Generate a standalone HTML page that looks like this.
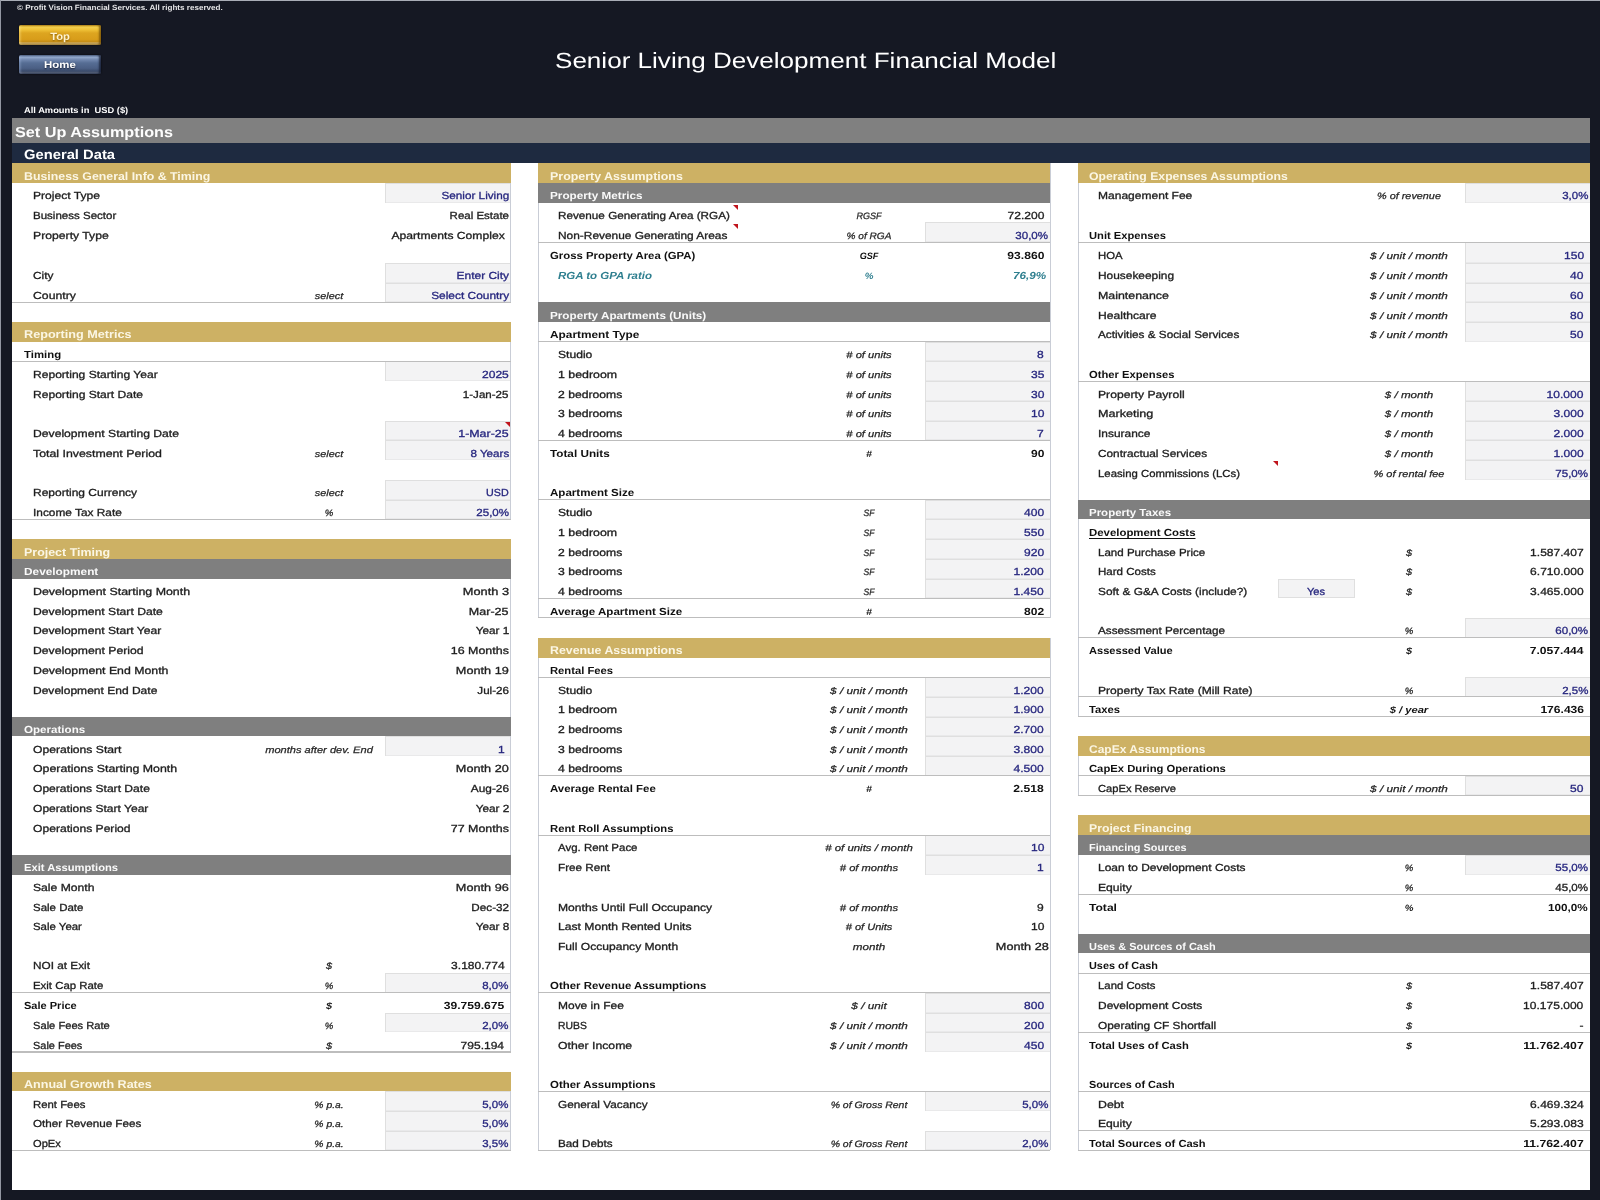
<!DOCTYPE html>
<html lang="en"><head><meta charset="utf-8">
<title>Senior Living Development Financial Model</title>
<style>
html,body{margin:0;padding:0}
html{will-change:transform}
body{width:1600px;height:1200px;overflow:hidden;position:relative;background:#151823;font-family:"Liberation Sans",sans-serif;color:#1c1c1c}
.b{position:absolute}
.t{position:absolute;white-space:nowrap;display:block;text-rendering:geometricPrecision}
.n{font-weight:400;color:#1f1f1f;-webkit-text-stroke:0.3px #1a1a1a}
.in{color:#27277f;-webkit-text-stroke:0.3px #27277f}
.bl{font-weight:700;color:#111}
.ul{text-decoration:underline;text-underline-offset:1.5px;text-decoration-thickness:1px}
.u{font-style:italic;color:#262626;-webkit-text-stroke:0.25px #262626}
.ub{font-style:italic;font-weight:700;color:#111}
.bi{font-style:italic;font-weight:700}
.teal{color:#2f7f8f}
.g{font-weight:700;color:#fbf6e4}
.h{font-weight:700;color:#fafafa}
.w{color:#fff}
.wb{color:#fff;font-weight:700}
.btn{position:absolute;left:18.5px;width:82px;border-radius:2px;box-sizing:border-box}
</style></head><body>
<div class="b" style="left:0;top:0;width:1600px;height:1px;background:#a9adb6"></div>
<div class="b" style="left:0;top:0;width:1px;height:1200px;background:#9397a2"></div>
<div class="b" style="left:12.4px;top:118.4px;width:1577.6px;height:1071.6px;background:#fff"></div>
<div class="b" style="left:12.4px;top:118.4px;width:1577.6px;height:25px;background:#808080"></div>
<div class="b" style="left:12.4px;top:143.4px;width:1577.6px;height:19.7px;background:#1e2a40"></div>
<span class="t wb" style="top:3px;font-size:7.5px;line-height:9.0px;left:17.20px;transform-origin:0 50%;transform:scaleX(1.0769);color:#e4e4e6;">© Profit Vision Financial Services. All rights reserved.</span>
<div class="btn" style="top:25.4px;height:20.1px;background:linear-gradient(180deg,#b8860f 0%,#f2cf4e 10%,#efc136 24%,#dda520 40%,#d89d1a 72%,#c48c16 84%,#c9a85e 89%,#a98a4a 100%);box-shadow:inset -2px 0 2px rgba(110,75,5,.75),inset 2px 0 2px rgba(255,235,150,.35),0 0 2px rgba(0,0,0,.8)"></div>
<div class="btn" style="top:54.6px;height:19px;background:linear-gradient(180deg,#5d7296 0%,#92a8cc 12%,#7389b0 24%,#566d94 42%,#4b5f84 70%,#3a4a69 86%,#566079 90%,#3b445a 100%);box-shadow:inset -2px 0 2px rgba(20,28,48,.8),inset 2px 0 2px rgba(170,190,225,.3),0 0 2px rgba(0,0,0,.8)"></div>
<span class="t wb" style="top:31px;font-size:10.5px;line-height:12.6px;left:59.80px;transform-origin:50% 50%;transform:translateX(-50%) scaleX(1.0667);color:#fff3d0;text-shadow:0 1px 1.5px rgba(120,80,0,.8);">Top</span>
<span class="t wb" style="top:60px;font-size:10.0px;line-height:12.0px;left:59.70px;transform-origin:50% 50%;transform:translateX(-50%) scaleX(1.144);color:#fff;text-shadow:0 1px 1.5px rgba(10,15,30,.8);">Home</span>
<span class="t w" style="top:48px;font-size:22.0px;line-height:26.4px;left:555.20px;transform-origin:0 50%;transform:scaleX(1.1845);">Senior Living Development Financial Model</span>
<span class="t wb" style="top:105px;font-size:8.5px;line-height:10.2px;left:23.50px;transform-origin:0 50%;transform:scaleX(1.0959);">All Amounts in  USD ($)</span>
<span class="t wb" style="top:125px;font-size:14.5px;line-height:17.4px;left:15.40px;transform-origin:0 50%;transform:scaleX(1.1185);color:#fdfdfd;">Set Up Assumptions</span>
<span class="t wb" style="top:147px;font-size:13.5px;line-height:16.2px;left:24.40px;transform-origin:0 50%;transform:scaleX(1.0925);">General Data</span>
<div class="b" style="left:12.40px;top:163.20px;width:498.40px;height:19.90px;background:#cdb164;"></div>
<div class="b" style="left:385.10px;top:183.10px;width:125.30px;height:19.80px;background:#f3f3f4;box-shadow:inset 0 1px 0 #dfdfdf,inset 1px 0 0 #dfdfdf,inset 0 -0.5px 0 #dfdfdf;"></div>
<div class="b" style="left:385.10px;top:262.90px;width:125.30px;height:19.70px;background:#f3f3f4;box-shadow:inset 0 1px 0 #dfdfdf,inset 1px 0 0 #dfdfdf,inset 0 -0.5px 0 #dfdfdf;"></div>
<div class="b" style="left:385.10px;top:282.60px;width:125.30px;height:19.80px;background:#f3f3f4;box-shadow:inset 0 1px 0 #dfdfdf,inset 1px 0 0 #dfdfdf,inset 0 -0.5px 0 #dfdfdf;"></div>
<div class="b" style="left:12.40px;top:322.20px;width:498.40px;height:19.50px;background:#cdb164;"></div>
<div class="b" style="left:385.10px;top:361.40px;width:125.30px;height:20.00px;background:#f3f3f4;box-shadow:inset 0 1px 0 #dfdfdf,inset 1px 0 0 #dfdfdf,inset 0 -0.5px 0 #dfdfdf;"></div>
<div class="b" style="left:385.10px;top:420.90px;width:125.30px;height:19.50px;background:#f3f3f4;box-shadow:inset 0 1px 0 #dfdfdf,inset 1px 0 0 #dfdfdf,inset 0 -0.5px 0 #dfdfdf;"></div>
<div class="b" style="left:385.10px;top:440.40px;width:125.30px;height:20.00px;background:#f3f3f4;box-shadow:inset 0 1px 0 #dfdfdf,inset 1px 0 0 #dfdfdf,inset 0 -0.5px 0 #dfdfdf;"></div>
<div class="b" style="left:385.10px;top:480.05px;width:125.30px;height:19.65px;background:#f3f3f4;box-shadow:inset 0 1px 0 #dfdfdf,inset 1px 0 0 #dfdfdf,inset 0 -0.5px 0 #dfdfdf;"></div>
<div class="b" style="left:385.10px;top:499.70px;width:125.30px;height:19.70px;background:#f3f3f4;box-shadow:inset 0 1px 0 #dfdfdf,inset 1px 0 0 #dfdfdf,inset 0 -0.5px 0 #dfdfdf;"></div>
<div class="b" style="left:12.40px;top:539.40px;width:498.40px;height:19.50px;background:#cdb164;"></div>
<div class="b" style="left:12.40px;top:558.90px;width:498.40px;height:19.80px;background:#7f7f7f;"></div>
<div class="b" style="left:12.40px;top:716.70px;width:498.40px;height:19.70px;background:#7f7f7f;"></div>
<div class="b" style="left:385.10px;top:736.40px;width:125.30px;height:19.50px;background:#f3f3f4;box-shadow:inset 0 1px 0 #dfdfdf,inset 1px 0 0 #dfdfdf,inset 0 -0.5px 0 #dfdfdf;"></div>
<div class="b" style="left:12.40px;top:854.70px;width:498.40px;height:19.85px;background:#7f7f7f;"></div>
<div class="b" style="left:385.10px;top:973.10px;width:125.30px;height:19.80px;background:#f3f3f4;box-shadow:inset 0 1px 0 #dfdfdf,inset 1px 0 0 #dfdfdf,inset 0 -0.5px 0 #dfdfdf;"></div>
<div class="b" style="left:385.10px;top:1012.70px;width:125.30px;height:19.70px;background:#f3f3f4;box-shadow:inset 0 1px 0 #dfdfdf,inset 1px 0 0 #dfdfdf,inset 0 -0.5px 0 #dfdfdf;"></div>
<div class="b" style="left:12.40px;top:1071.70px;width:498.40px;height:19.70px;background:#cdb164;"></div>
<div class="b" style="left:385.10px;top:1091.40px;width:125.30px;height:19.50px;background:#f3f3f4;box-shadow:inset 0 1px 0 #dfdfdf,inset 1px 0 0 #dfdfdf,inset 0 -0.5px 0 #dfdfdf;"></div>
<div class="b" style="left:385.10px;top:1110.90px;width:125.30px;height:19.80px;background:#f3f3f4;box-shadow:inset 0 1px 0 #dfdfdf,inset 1px 0 0 #dfdfdf,inset 0 -0.5px 0 #dfdfdf;"></div>
<div class="b" style="left:385.10px;top:1130.70px;width:125.30px;height:19.60px;background:#f3f3f4;box-shadow:inset 0 1px 0 #dfdfdf,inset 1px 0 0 #dfdfdf,inset 0 -0.5px 0 #dfdfdf;"></div>
<div class="b" style="left:510.00px;top:163.20px;width:1.2px;height:139.20px;background:#c9cdd6"></div>
<div class="b" style="left:510.00px;top:322.20px;width:1.2px;height:197.20px;background:#c9cdd6"></div>
<div class="b" style="left:510.00px;top:539.40px;width:1.2px;height:512.65px;background:#c9cdd6"></div>
<div class="b" style="left:510.00px;top:1071.70px;width:1.2px;height:78.60px;background:#c9cdd6"></div>
<div class="b" style="left:12.40px;top:163.20px;width:498.40px;height:19.90px;background:#cdb164;"></div>
<div class="b" style="left:12.40px;top:322.20px;width:498.40px;height:19.50px;background:#cdb164;"></div>
<div class="b" style="left:12.40px;top:539.40px;width:498.40px;height:19.50px;background:#cdb164;"></div>
<div class="b" style="left:12.40px;top:558.90px;width:498.40px;height:19.80px;background:#7f7f7f;"></div>
<div class="b" style="left:12.40px;top:716.70px;width:498.40px;height:19.70px;background:#7f7f7f;"></div>
<div class="b" style="left:12.40px;top:854.70px;width:498.40px;height:19.85px;background:#7f7f7f;"></div>
<div class="b" style="left:12.40px;top:1071.70px;width:498.40px;height:19.70px;background:#cdb164;"></div>
<div class="b" style="left:12.40px;top:301.80px;width:498.40px;height:1.2px;background:#bdbdbd"></div>
<div class="b" style="left:12.40px;top:360.80px;width:498.40px;height:1.2px;background:#bdbdbd"></div>
<div class="b" style="left:12.40px;top:518.80px;width:498.40px;height:1.2px;background:#bdbdbd"></div>
<div class="b" style="left:12.40px;top:992.30px;width:498.40px;height:1.2px;background:#bdbdbd"></div>
<div class="b" style="left:12.40px;top:1051.45px;width:498.40px;height:1.2px;background:#bdbdbd"></div>
<div class="b" style="left:12.40px;top:1149.70px;width:498.40px;height:1.2px;background:#bdbdbd"></div>
<span class="t g" style="top:171px;font-size:11.25px;line-height:13.5px;left:23.70px;transform-origin:0 50%;transform:scaleX(1.0967);">Business General Info &amp; Timing</span>
<span class="t n" style="top:191px;font-size:10.25px;line-height:12.3px;left:32.50px;transform-origin:0 50%;transform:scaleX(1.1799);">Project Type</span>
<span class="t n in" style="top:191px;font-size:10.25px;line-height:12.3px;right:1091.20px;transform-origin:100% 50%;transform:scaleX(1.1446);">Senior Living</span>
<span class="t n" style="top:211px;font-size:10.25px;line-height:12.3px;left:32.50px;transform-origin:0 50%;transform:scaleX(1.1248);">Business Sector</span>
<span class="t n" style="top:211px;font-size:10.25px;line-height:12.3px;right:1091.20px;transform-origin:100% 50%;transform:scaleX(1.121);">Real Estate</span>
<span class="t n" style="top:231px;font-size:10.25px;line-height:12.3px;left:32.50px;transform-origin:0 50%;transform:scaleX(1.1913);">Property Type</span>
<span class="t n" style="top:231px;font-size:10.25px;line-height:12.3px;right:1095.50px;transform-origin:100% 50%;transform:scaleX(1.1839);">Apartments Complex</span>
<span class="t n" style="top:271px;font-size:10.25px;line-height:12.3px;left:32.50px;transform-origin:0 50%;transform:scaleX(1.1588);">City</span>
<span class="t n in" style="top:271px;font-size:10.25px;line-height:12.3px;right:1091.20px;transform-origin:100% 50%;transform:scaleX(1.1648);">Enter City</span>
<span class="t n" style="top:291px;font-size:10.25px;line-height:12.3px;left:32.50px;transform-origin:0 50%;transform:scaleX(1.1942);">Country</span>
<span class="t u" style="top:291px;font-size:9.25px;line-height:11.1px;left:329.00px;transform-origin:50% 50%;transform:translateX(-50%) scaleX(1.1736);">select</span>
<span class="t n in" style="top:291px;font-size:10.25px;line-height:12.3px;right:1091.20px;transform-origin:100% 50%;transform:scaleX(1.1613);">Select Country</span>
<span class="t g" style="top:329px;font-size:11.25px;line-height:13.5px;left:23.70px;transform-origin:0 50%;transform:scaleX(1.1244);">Reporting Metrics</span>
<span class="t bl" style="top:350px;font-size:10.25px;line-height:12.3px;left:23.70px;transform-origin:0 50%;transform:scaleX(1.1102);">Timing</span>
<span class="t n" style="top:370px;font-size:10.25px;line-height:12.3px;left:32.50px;transform-origin:0 50%;transform:scaleX(1.1767);">Reporting Starting Year</span>
<span class="t n in" style="top:370px;font-size:10.25px;line-height:12.3px;right:1091.20px;transform-origin:100% 50%;transform:scaleX(1.1735);">2025</span>
<span class="t n" style="top:390px;font-size:10.25px;line-height:12.3px;left:32.50px;transform-origin:0 50%;transform:scaleX(1.1779);">Reporting Start Date</span>
<span class="t n" style="top:390px;font-size:10.25px;line-height:12.3px;right:1091.20px;transform-origin:100% 50%;transform:scaleX(1.1273);">1-Jan-25</span>
<span class="t n" style="top:429px;font-size:10.25px;line-height:12.3px;left:32.50px;transform-origin:0 50%;transform:scaleX(1.1864);">Development Starting Date</span>
<span class="t n in" style="top:429px;font-size:10.25px;line-height:12.3px;right:1091.20px;transform-origin:100% 50%;transform:scaleX(1.211);">1-Mar-25</span>
<div class="b" style="left:504.70px;top:421.50px;width:0;height:0;border-top:5.5px solid #c0141c;border-left:5.5px solid transparent"></div>
<span class="t n" style="top:449px;font-size:10.25px;line-height:12.3px;left:32.50px;transform-origin:0 50%;transform:scaleX(1.2031);">Total Investment Period</span>
<span class="t u" style="top:449px;font-size:9.25px;line-height:11.1px;left:329.00px;transform-origin:50% 50%;transform:translateX(-50%) scaleX(1.1736);">select</span>
<span class="t n in" style="top:449px;font-size:10.25px;line-height:12.3px;right:1091.20px;transform-origin:100% 50%;transform:scaleX(1.1335);">8 Years</span>
<span class="t n" style="top:488px;font-size:10.25px;line-height:12.3px;left:32.50px;transform-origin:0 50%;transform:scaleX(1.1708);">Reporting Currency</span>
<span class="t u" style="top:488px;font-size:9.25px;line-height:11.1px;left:329.00px;transform-origin:50% 50%;transform:translateX(-50%) scaleX(1.1736);">select</span>
<span class="t n in" style="top:488px;font-size:10.25px;line-height:12.3px;right:1091.20px;transform-origin:100% 50%;transform:scaleX(1.0459);">USD</span>
<span class="t n" style="top:508px;font-size:10.25px;line-height:12.3px;left:32.50px;transform-origin:0 50%;transform:scaleX(1.1577);">Income Tax Rate</span>
<span class="t u" style="top:508px;font-size:9.25px;line-height:11.1px;left:329.00px;transform-origin:50% 50%;transform:translateX(-50%) scaleX(1.0376);">%</span>
<span class="t n in" style="top:508px;font-size:10.25px;line-height:12.3px;right:1091.20px;transform-origin:100% 50%;transform:scaleX(1.1285);">25,0%</span>
<span class="t g" style="top:547px;font-size:11.25px;line-height:13.5px;left:23.70px;transform-origin:0 50%;transform:scaleX(1.1058);">Project Timing</span>
<span class="t h" style="top:567px;font-size:10.25px;line-height:12.3px;left:23.70px;transform-origin:0 50%;transform:scaleX(1.1544);">Development</span>
<span class="t n" style="top:587px;font-size:10.25px;line-height:12.3px;left:32.50px;transform-origin:0 50%;transform:scaleX(1.2094);">Development Starting Month</span>
<span class="t n" style="top:587px;font-size:10.25px;line-height:12.3px;right:1091.20px;transform-origin:100% 50%;transform:scaleX(1.2471);">Month 3</span>
<span class="t n" style="top:607px;font-size:10.25px;line-height:12.3px;left:32.50px;transform-origin:0 50%;transform:scaleX(1.187);">Development Start Date</span>
<span class="t n" style="top:607px;font-size:10.25px;line-height:12.3px;right:1091.20px;transform-origin:100% 50%;transform:scaleX(1.2209);">Mar-25</span>
<span class="t n" style="top:626px;font-size:10.25px;line-height:12.3px;left:32.50px;transform-origin:0 50%;transform:scaleX(1.1855);">Development Start Year</span>
<span class="t n" style="top:626px;font-size:10.25px;line-height:12.3px;right:1091.20px;transform-origin:100% 50%;transform:scaleX(1.1484);">Year 1</span>
<span class="t n" style="top:646px;font-size:10.25px;line-height:12.3px;left:32.50px;transform-origin:0 50%;transform:scaleX(1.1899);">Development Period</span>
<span class="t n" style="top:646px;font-size:10.25px;line-height:12.3px;right:1091.20px;transform-origin:100% 50%;transform:scaleX(1.2126);">16 Months</span>
<span class="t n" style="top:666px;font-size:10.25px;line-height:12.3px;left:32.50px;transform-origin:0 50%;transform:scaleX(1.2001);">Development End Month</span>
<span class="t n" style="top:666px;font-size:10.25px;line-height:12.3px;right:1091.20px;transform-origin:100% 50%;transform:scaleX(1.2372);">Month 19</span>
<span class="t n" style="top:686px;font-size:10.25px;line-height:12.3px;left:32.50px;transform-origin:0 50%;transform:scaleX(1.173);">Development End Date</span>
<span class="t n" style="top:686px;font-size:10.25px;line-height:12.3px;right:1091.20px;transform-origin:100% 50%;transform:scaleX(1.1313);">Jul-26</span>
<span class="t h" style="top:725px;font-size:10.25px;line-height:12.3px;left:23.70px;transform-origin:0 50%;transform:scaleX(1.13);">Operations</span>
<span class="t n" style="top:745px;font-size:10.25px;line-height:12.3px;left:32.50px;transform-origin:0 50%;transform:scaleX(1.1854);">Operations Start</span>
<span class="t u" style="top:745px;font-size:9.25px;line-height:11.1px;left:319.20px;transform-origin:50% 50%;transform:translateX(-50%) scaleX(1.199);">months after dev. End</span>
<span class="t n in" style="top:745px;font-size:10.25px;line-height:12.3px;right:1095.50px;transform-origin:100% 50%;transform:scaleX(1.1735);">1</span>
<span class="t n" style="top:764px;font-size:10.25px;line-height:12.3px;left:32.50px;transform-origin:0 50%;transform:scaleX(1.2048);">Operations Starting Month</span>
<span class="t n" style="top:764px;font-size:10.25px;line-height:12.3px;right:1091.20px;transform-origin:100% 50%;transform:scaleX(1.2372);">Month 20</span>
<span class="t n" style="top:784px;font-size:10.25px;line-height:12.3px;left:32.50px;transform-origin:0 50%;transform:scaleX(1.1791);">Operations Start Date</span>
<span class="t n" style="top:784px;font-size:10.25px;line-height:12.3px;right:1091.20px;transform-origin:100% 50%;transform:scaleX(1.1558);">Aug-26</span>
<span class="t n" style="top:804px;font-size:10.25px;line-height:12.3px;left:32.50px;transform-origin:0 50%;transform:scaleX(1.1773);">Operations Start Year</span>
<span class="t n" style="top:804px;font-size:10.25px;line-height:12.3px;right:1091.20px;transform-origin:100% 50%;transform:scaleX(1.1484);">Year 2</span>
<span class="t n" style="top:824px;font-size:10.25px;line-height:12.3px;left:32.50px;transform-origin:0 50%;transform:scaleX(1.1808);">Operations Period</span>
<span class="t n" style="top:824px;font-size:10.25px;line-height:12.3px;right:1091.20px;transform-origin:100% 50%;transform:scaleX(1.2126);">77 Months</span>
<span class="t h" style="top:863px;font-size:10.25px;line-height:12.3px;left:23.70px;transform-origin:0 50%;transform:scaleX(1.0909);">Exit Assumptions</span>
<span class="t n" style="top:883px;font-size:10.25px;line-height:12.3px;left:32.50px;transform-origin:0 50%;transform:scaleX(1.1856);">Sale Month</span>
<span class="t n" style="top:883px;font-size:10.25px;line-height:12.3px;right:1091.20px;transform-origin:100% 50%;transform:scaleX(1.2372);">Month 96</span>
<span class="t n" style="top:903px;font-size:10.25px;line-height:12.3px;left:32.50px;transform-origin:0 50%;transform:scaleX(1.1196);">Sale Date</span>
<span class="t n" style="top:903px;font-size:10.25px;line-height:12.3px;right:1091.20px;transform-origin:100% 50%;transform:scaleX(1.1408);">Dec-32</span>
<span class="t n" style="top:922px;font-size:10.25px;line-height:12.3px;left:32.50px;transform-origin:0 50%;transform:scaleX(1.114);">Sale Year</span>
<span class="t n" style="top:922px;font-size:10.25px;line-height:12.3px;right:1091.20px;transform-origin:100% 50%;transform:scaleX(1.1484);">Year 8</span>
<span class="t n" style="top:961px;font-size:10.25px;line-height:12.3px;left:32.50px;transform-origin:0 50%;transform:scaleX(1.1482);">NOI at Exit</span>
<span class="t u" style="top:961px;font-size:9.25px;line-height:11.1px;left:329.00px;transform-origin:50% 50%;transform:translateX(-50%) scaleX(1.175);">$</span>
<span class="t n" style="top:961px;font-size:10.25px;line-height:12.3px;right:1095.50px;transform-origin:100% 50%;transform:scaleX(1.173);">3.180.774</span>
<span class="t n" style="top:981px;font-size:10.25px;line-height:12.3px;left:32.50px;transform-origin:0 50%;transform:scaleX(1.1121);">Exit Cap Rate</span>
<span class="t u" style="top:981px;font-size:9.25px;line-height:11.1px;left:329.00px;transform-origin:50% 50%;transform:translateX(-50%) scaleX(1.0376);">%</span>
<span class="t n in" style="top:981px;font-size:10.25px;line-height:12.3px;right:1091.20px;transform-origin:100% 50%;transform:scaleX(1.1176);">8,0%</span>
<span class="t bl" style="top:1001px;font-size:10.25px;line-height:12.3px;left:23.70px;transform-origin:0 50%;transform:scaleX(1.0761);">Sale Price</span>
<span class="t ub" style="top:1001px;font-size:9.25px;line-height:11.1px;left:329.00px;transform-origin:50% 50%;transform:translateX(-50%) scaleX(1.175);">$</span>
<span class="t bl" style="top:1001px;font-size:10.25px;line-height:12.3px;right:1095.50px;transform-origin:100% 50%;transform:scaleX(1.1808);">39.759.675</span>
<span class="t n" style="top:1021px;font-size:10.25px;line-height:12.3px;left:32.50px;transform-origin:0 50%;transform:scaleX(1.0869);">Sale Fees Rate</span>
<span class="t u" style="top:1021px;font-size:9.25px;line-height:11.1px;left:329.00px;transform-origin:50% 50%;transform:translateX(-50%) scaleX(1.0376);">%</span>
<span class="t n in" style="top:1021px;font-size:10.25px;line-height:12.3px;right:1091.20px;transform-origin:100% 50%;transform:scaleX(1.1176);">2,0%</span>
<span class="t n" style="top:1041px;font-size:10.25px;line-height:12.3px;left:32.50px;transform-origin:0 50%;transform:scaleX(1.0687);">Sale Fees</span>
<span class="t u" style="top:1041px;font-size:9.25px;line-height:11.1px;left:329.00px;transform-origin:50% 50%;transform:translateX(-50%) scaleX(1.175);">$</span>
<span class="t n" style="top:1041px;font-size:10.25px;line-height:12.3px;right:1095.50px;transform-origin:100% 50%;transform:scaleX(1.1732);">795.194</span>
<span class="t g" style="top:1079px;font-size:11.25px;line-height:13.5px;left:23.70px;transform-origin:0 50%;transform:scaleX(1.1171);">Annual Growth Rates</span>
<span class="t n" style="top:1100px;font-size:10.25px;line-height:12.3px;left:32.50px;transform-origin:0 50%;transform:scaleX(1.1088);">Rent Fees</span>
<span class="t u" style="top:1100px;font-size:9.25px;line-height:11.1px;left:329.00px;transform-origin:50% 50%;transform:translateX(-50%) scaleX(1.1155);">% p.a.</span>
<span class="t n in" style="top:1100px;font-size:10.25px;line-height:12.3px;right:1091.20px;transform-origin:100% 50%;transform:scaleX(1.1176);">5,0%</span>
<span class="t n" style="top:1119px;font-size:10.25px;line-height:12.3px;left:32.50px;transform-origin:0 50%;transform:scaleX(1.1383);">Other Revenue Fees</span>
<span class="t u" style="top:1119px;font-size:9.25px;line-height:11.1px;left:329.00px;transform-origin:50% 50%;transform:translateX(-50%) scaleX(1.1155);">% p.a.</span>
<span class="t n in" style="top:1119px;font-size:10.25px;line-height:12.3px;right:1091.20px;transform-origin:100% 50%;transform:scaleX(1.1176);">5,0%</span>
<span class="t n" style="top:1139px;font-size:10.25px;line-height:12.3px;left:32.50px;transform-origin:0 50%;transform:scaleX(1.0852);">OpEx</span>
<span class="t u" style="top:1139px;font-size:9.25px;line-height:11.1px;left:329.00px;transform-origin:50% 50%;transform:translateX(-50%) scaleX(1.1155);">% p.a.</span>
<span class="t n in" style="top:1139px;font-size:10.25px;line-height:12.3px;right:1091.20px;transform-origin:100% 50%;transform:scaleX(1.1176);">3,5%</span>
<div class="b" style="left:538.40px;top:163.20px;width:512.00px;height:19.90px;background:#cdb164;"></div>
<div class="b" style="left:538.40px;top:183.10px;width:512.00px;height:19.80px;background:#7f7f7f;"></div>
<div class="b" style="left:924.90px;top:222.40px;width:125.10px;height:20.00px;background:#f3f3f4;box-shadow:inset 0 1px 0 #dfdfdf,inset 1px 0 0 #dfdfdf,inset 0 -0.5px 0 #dfdfdf;"></div>
<div class="b" style="left:538.40px;top:302.40px;width:512.00px;height:19.80px;background:#7f7f7f;"></div>
<div class="b" style="left:924.90px;top:341.70px;width:125.10px;height:19.70px;background:#f3f3f4;box-shadow:inset 0 1px 0 #dfdfdf,inset 1px 0 0 #dfdfdf,inset 0 -0.5px 0 #dfdfdf;"></div>
<div class="b" style="left:924.90px;top:361.40px;width:125.10px;height:20.00px;background:#f3f3f4;box-shadow:inset 0 1px 0 #dfdfdf,inset 1px 0 0 #dfdfdf,inset 0 -0.5px 0 #dfdfdf;"></div>
<div class="b" style="left:924.90px;top:381.40px;width:125.10px;height:19.70px;background:#f3f3f4;box-shadow:inset 0 1px 0 #dfdfdf,inset 1px 0 0 #dfdfdf,inset 0 -0.5px 0 #dfdfdf;"></div>
<div class="b" style="left:924.90px;top:401.10px;width:125.10px;height:19.80px;background:#f3f3f4;box-shadow:inset 0 1px 0 #dfdfdf,inset 1px 0 0 #dfdfdf,inset 0 -0.5px 0 #dfdfdf;"></div>
<div class="b" style="left:924.90px;top:420.90px;width:125.10px;height:19.50px;background:#f3f3f4;box-shadow:inset 0 1px 0 #dfdfdf,inset 1px 0 0 #dfdfdf,inset 0 -0.5px 0 #dfdfdf;"></div>
<div class="b" style="left:924.90px;top:499.70px;width:125.10px;height:19.70px;background:#f3f3f4;box-shadow:inset 0 1px 0 #dfdfdf,inset 1px 0 0 #dfdfdf,inset 0 -0.5px 0 #dfdfdf;"></div>
<div class="b" style="left:924.90px;top:519.40px;width:125.10px;height:20.00px;background:#f3f3f4;box-shadow:inset 0 1px 0 #dfdfdf,inset 1px 0 0 #dfdfdf,inset 0 -0.5px 0 #dfdfdf;"></div>
<div class="b" style="left:924.90px;top:539.40px;width:125.10px;height:19.50px;background:#f3f3f4;box-shadow:inset 0 1px 0 #dfdfdf,inset 1px 0 0 #dfdfdf,inset 0 -0.5px 0 #dfdfdf;"></div>
<div class="b" style="left:924.90px;top:558.90px;width:125.10px;height:19.80px;background:#f3f3f4;box-shadow:inset 0 1px 0 #dfdfdf,inset 1px 0 0 #dfdfdf,inset 0 -0.5px 0 #dfdfdf;"></div>
<div class="b" style="left:924.90px;top:578.70px;width:125.10px;height:19.70px;background:#f3f3f4;box-shadow:inset 0 1px 0 #dfdfdf,inset 1px 0 0 #dfdfdf,inset 0 -0.5px 0 #dfdfdf;"></div>
<div class="b" style="left:538.40px;top:637.90px;width:512.00px;height:19.75px;background:#cdb164;"></div>
<div class="b" style="left:924.90px;top:677.40px;width:125.10px;height:19.50px;background:#f3f3f4;box-shadow:inset 0 1px 0 #dfdfdf,inset 1px 0 0 #dfdfdf,inset 0 -0.5px 0 #dfdfdf;"></div>
<div class="b" style="left:924.90px;top:696.90px;width:125.10px;height:19.80px;background:#f3f3f4;box-shadow:inset 0 1px 0 #dfdfdf,inset 1px 0 0 #dfdfdf,inset 0 -0.5px 0 #dfdfdf;"></div>
<div class="b" style="left:924.90px;top:716.70px;width:125.10px;height:19.70px;background:#f3f3f4;box-shadow:inset 0 1px 0 #dfdfdf,inset 1px 0 0 #dfdfdf,inset 0 -0.5px 0 #dfdfdf;"></div>
<div class="b" style="left:924.90px;top:736.40px;width:125.10px;height:19.50px;background:#f3f3f4;box-shadow:inset 0 1px 0 #dfdfdf,inset 1px 0 0 #dfdfdf,inset 0 -0.5px 0 #dfdfdf;"></div>
<div class="b" style="left:924.90px;top:755.90px;width:125.10px;height:19.80px;background:#f3f3f4;box-shadow:inset 0 1px 0 #dfdfdf,inset 1px 0 0 #dfdfdf,inset 0 -0.5px 0 #dfdfdf;"></div>
<div class="b" style="left:924.90px;top:835.10px;width:125.10px;height:19.60px;background:#f3f3f4;box-shadow:inset 0 1px 0 #dfdfdf,inset 1px 0 0 #dfdfdf,inset 0 -0.5px 0 #dfdfdf;"></div>
<div class="b" style="left:924.90px;top:854.70px;width:125.10px;height:19.85px;background:#f3f3f4;box-shadow:inset 0 1px 0 #dfdfdf,inset 1px 0 0 #dfdfdf,inset 0 -0.5px 0 #dfdfdf;"></div>
<div class="b" style="left:924.90px;top:992.90px;width:125.10px;height:19.80px;background:#f3f3f4;box-shadow:inset 0 1px 0 #dfdfdf,inset 1px 0 0 #dfdfdf,inset 0 -0.5px 0 #dfdfdf;"></div>
<div class="b" style="left:924.90px;top:1012.70px;width:125.10px;height:19.70px;background:#f3f3f4;box-shadow:inset 0 1px 0 #dfdfdf,inset 1px 0 0 #dfdfdf,inset 0 -0.5px 0 #dfdfdf;"></div>
<div class="b" style="left:924.90px;top:1032.40px;width:125.10px;height:19.65px;background:#f3f3f4;box-shadow:inset 0 1px 0 #dfdfdf,inset 1px 0 0 #dfdfdf,inset 0 -0.5px 0 #dfdfdf;"></div>
<div class="b" style="left:924.90px;top:1091.40px;width:125.10px;height:19.50px;background:#f3f3f4;box-shadow:inset 0 1px 0 #dfdfdf,inset 1px 0 0 #dfdfdf,inset 0 -0.5px 0 #dfdfdf;"></div>
<div class="b" style="left:924.90px;top:1130.70px;width:125.10px;height:19.60px;background:#f3f3f4;box-shadow:inset 0 1px 0 #dfdfdf,inset 1px 0 0 #dfdfdf,inset 0 -0.5px 0 #dfdfdf;"></div>
<div class="b" style="left:538.20px;top:163.20px;width:1.2px;height:454.70px;background:#c9cdd6"></div>
<div class="b" style="left:1049.60px;top:163.20px;width:1.2px;height:454.70px;background:#c9cdd6"></div>
<div class="b" style="left:538.20px;top:637.90px;width:1.2px;height:512.40px;background:#c9cdd6"></div>
<div class="b" style="left:1049.60px;top:637.90px;width:1.2px;height:512.40px;background:#c9cdd6"></div>
<div class="b" style="left:538.40px;top:163.20px;width:512.00px;height:19.90px;background:#cdb164;"></div>
<div class="b" style="left:538.40px;top:183.10px;width:512.00px;height:19.80px;background:#7f7f7f;"></div>
<div class="b" style="left:538.40px;top:302.40px;width:512.00px;height:19.80px;background:#7f7f7f;"></div>
<div class="b" style="left:538.40px;top:637.90px;width:512.00px;height:19.75px;background:#cdb164;"></div>
<div class="b" style="left:538.40px;top:241.80px;width:512.00px;height:1.2px;background:#bdbdbd"></div>
<div class="b" style="left:538.40px;top:341.10px;width:512.00px;height:1.2px;background:#bdbdbd"></div>
<div class="b" style="left:538.40px;top:439.80px;width:512.00px;height:1.2px;background:#bdbdbd"></div>
<div class="b" style="left:538.40px;top:499.10px;width:512.00px;height:1.2px;background:#bdbdbd"></div>
<div class="b" style="left:538.40px;top:597.80px;width:512.00px;height:1.2px;background:#bdbdbd"></div>
<div class="b" style="left:538.40px;top:617.30px;width:512.00px;height:1.2px;background:#bdbdbd"></div>
<div class="b" style="left:538.40px;top:676.80px;width:512.00px;height:1.2px;background:#bdbdbd"></div>
<div class="b" style="left:538.40px;top:775.10px;width:512.00px;height:1.2px;background:#bdbdbd"></div>
<div class="b" style="left:538.40px;top:834.50px;width:512.00px;height:1.2px;background:#bdbdbd"></div>
<div class="b" style="left:538.40px;top:992.30px;width:512.00px;height:1.2px;background:#bdbdbd"></div>
<div class="b" style="left:538.40px;top:1090.80px;width:512.00px;height:1.2px;background:#bdbdbd"></div>
<div class="b" style="left:538.40px;top:1149.70px;width:512.00px;height:1.2px;background:#bdbdbd"></div>
<span class="t g" style="top:171px;font-size:11.25px;line-height:13.5px;left:549.50px;transform-origin:0 50%;transform:scaleX(1.1048);">Property Assumptions</span>
<span class="t h" style="top:191px;font-size:10.25px;line-height:12.3px;left:549.50px;transform-origin:0 50%;transform:scaleX(1.1438);">Property Metrics</span>
<span class="t n" style="top:211px;font-size:10.25px;line-height:12.3px;left:558.30px;transform-origin:0 50%;transform:scaleX(1.1426);">Revenue Generating Area (RGA)</span>
<span class="t u" style="top:211px;font-size:9.25px;line-height:11.1px;left:869.20px;transform-origin:50% 50%;transform:translateX(-50%) scaleX(0.9726);">RGSF</span>
<span class="t n" style="top:211px;font-size:10.25px;line-height:12.3px;right:555.90px;transform-origin:100% 50%;transform:scaleX(1.1731);">72.200</span>
<div class="b" style="left:732.50px;top:204.50px;width:0;height:0;border-top:5.5px solid #c0141c;border-left:5.5px solid transparent"></div>
<span class="t n" style="top:231px;font-size:10.25px;line-height:12.3px;left:558.30px;transform-origin:0 50%;transform:scaleX(1.1611);">Non-Revenue Generating Areas</span>
<span class="t u" style="top:231px;font-size:9.25px;line-height:11.1px;left:869.20px;transform-origin:50% 50%;transform:translateX(-50%) scaleX(1.0902);">% of RGA</span>
<span class="t n in" style="top:231px;font-size:10.25px;line-height:12.3px;right:551.60px;transform-origin:100% 50%;transform:scaleX(1.1285);">30,0%</span>
<div class="b" style="left:732.50px;top:224.00px;width:0;height:0;border-top:5.5px solid #c0141c;border-left:5.5px solid transparent"></div>
<span class="t bl" style="top:251px;font-size:10.25px;line-height:12.3px;left:549.50px;transform-origin:0 50%;transform:scaleX(1.1087);">Gross Property Area (GPA)</span>
<span class="t ub" style="top:251px;font-size:9.25px;line-height:11.1px;left:869.20px;transform-origin:50% 50%;transform:translateX(-50%) scaleX(0.986);">GSF</span>
<span class="t bl" style="top:251px;font-size:10.25px;line-height:12.3px;right:555.90px;transform-origin:100% 50%;transform:scaleX(1.1794);">93.860</span>
<span class="t bi teal" style="top:271px;font-size:10.25px;line-height:12.3px;left:558.30px;transform-origin:0 50%;transform:scaleX(1.1207);">RGA to GPA ratio</span>
<span class="t bi teal" style="top:271px;font-size:9.25px;line-height:11.1px;left:869.20px;transform-origin:50% 50%;transform:translateX(-50%) scaleX(1.0579);">%</span>
<span class="t bi teal" style="top:271px;font-size:10.25px;line-height:12.3px;right:553.60px;transform-origin:100% 50%;transform:scaleX(1.1385);">76,9%</span>
<span class="t h" style="top:311px;font-size:10.25px;line-height:12.3px;left:549.50px;transform-origin:0 50%;transform:scaleX(1.1415);">Property Apartments (Units)</span>
<span class="t bl" style="top:330px;font-size:10.25px;line-height:12.3px;left:549.50px;transform-origin:0 50%;transform:scaleX(1.1573);">Apartment Type</span>
<span class="t n" style="top:350px;font-size:10.25px;line-height:12.3px;left:558.30px;transform-origin:0 50%;transform:scaleX(1.1803);">Studio</span>
<span class="t u" style="top:350px;font-size:9.25px;line-height:11.1px;left:869.20px;transform-origin:50% 50%;transform:translateX(-50%) scaleX(1.2053);"># of units</span>
<span class="t n in" style="top:350px;font-size:10.25px;line-height:12.3px;right:555.90px;transform-origin:100% 50%;transform:scaleX(1.1735);">8</span>
<span class="t n" style="top:370px;font-size:10.25px;line-height:12.3px;left:558.30px;transform-origin:0 50%;transform:scaleX(1.2073);">1 bedroom</span>
<span class="t u" style="top:370px;font-size:9.25px;line-height:11.1px;left:869.20px;transform-origin:50% 50%;transform:translateX(-50%) scaleX(1.2053);"># of units</span>
<span class="t n in" style="top:370px;font-size:10.25px;line-height:12.3px;right:555.90px;transform-origin:100% 50%;transform:scaleX(1.1735);">35</span>
<span class="t n" style="top:390px;font-size:10.25px;line-height:12.3px;left:558.30px;transform-origin:0 50%;transform:scaleX(1.1883);">2 bedrooms</span>
<span class="t u" style="top:390px;font-size:9.25px;line-height:11.1px;left:869.20px;transform-origin:50% 50%;transform:translateX(-50%) scaleX(1.2053);"># of units</span>
<span class="t n in" style="top:390px;font-size:10.25px;line-height:12.3px;right:555.90px;transform-origin:100% 50%;transform:scaleX(1.1735);">30</span>
<span class="t n" style="top:409px;font-size:10.25px;line-height:12.3px;left:558.30px;transform-origin:0 50%;transform:scaleX(1.1883);">3 bedrooms</span>
<span class="t u" style="top:409px;font-size:9.25px;line-height:11.1px;left:869.20px;transform-origin:50% 50%;transform:translateX(-50%) scaleX(1.2053);"># of units</span>
<span class="t n in" style="top:409px;font-size:10.25px;line-height:12.3px;right:555.90px;transform-origin:100% 50%;transform:scaleX(1.1735);">10</span>
<span class="t n" style="top:429px;font-size:10.25px;line-height:12.3px;left:558.30px;transform-origin:0 50%;transform:scaleX(1.1883);">4 bedrooms</span>
<span class="t u" style="top:429px;font-size:9.25px;line-height:11.1px;left:869.20px;transform-origin:50% 50%;transform:translateX(-50%) scaleX(1.2053);"># of units</span>
<span class="t n in" style="top:429px;font-size:10.25px;line-height:12.3px;right:555.90px;transform-origin:100% 50%;transform:scaleX(1.1735);">7</span>
<span class="t bl" style="top:449px;font-size:10.25px;line-height:12.3px;left:549.50px;transform-origin:0 50%;transform:scaleX(1.1449);">Total Units</span>
<span class="t ub" style="top:449px;font-size:9.25px;line-height:11.1px;left:869.20px;transform-origin:50% 50%;transform:translateX(-50%) scaleX(1.1542);">#</span>
<span class="t bl" style="top:449px;font-size:10.25px;line-height:12.3px;right:555.90px;transform-origin:100% 50%;transform:scaleX(1.1735);">90</span>
<span class="t bl" style="top:488px;font-size:10.25px;line-height:12.3px;left:549.50px;transform-origin:0 50%;transform:scaleX(1.1292);">Apartment Size</span>
<span class="t n" style="top:508px;font-size:10.25px;line-height:12.3px;left:558.30px;transform-origin:0 50%;transform:scaleX(1.1803);">Studio</span>
<span class="t u" style="top:508px;font-size:9.25px;line-height:11.1px;left:869.20px;transform-origin:50% 50%;transform:translateX(-50%) scaleX(0.9275);">SF</span>
<span class="t n in" style="top:508px;font-size:10.25px;line-height:12.3px;right:555.90px;transform-origin:100% 50%;transform:scaleX(1.1735);">400</span>
<span class="t n" style="top:528px;font-size:10.25px;line-height:12.3px;left:558.30px;transform-origin:0 50%;transform:scaleX(1.2073);">1 bedroom</span>
<span class="t u" style="top:528px;font-size:9.25px;line-height:11.1px;left:869.20px;transform-origin:50% 50%;transform:translateX(-50%) scaleX(0.9275);">SF</span>
<span class="t n in" style="top:528px;font-size:10.25px;line-height:12.3px;right:555.90px;transform-origin:100% 50%;transform:scaleX(1.1735);">550</span>
<span class="t n" style="top:548px;font-size:10.25px;line-height:12.3px;left:558.30px;transform-origin:0 50%;transform:scaleX(1.1883);">2 bedrooms</span>
<span class="t u" style="top:548px;font-size:9.25px;line-height:11.1px;left:869.20px;transform-origin:50% 50%;transform:translateX(-50%) scaleX(0.9275);">SF</span>
<span class="t n in" style="top:548px;font-size:10.25px;line-height:12.3px;right:555.90px;transform-origin:100% 50%;transform:scaleX(1.1735);">920</span>
<span class="t n" style="top:567px;font-size:10.25px;line-height:12.3px;left:558.30px;transform-origin:0 50%;transform:scaleX(1.1883);">3 bedrooms</span>
<span class="t u" style="top:567px;font-size:9.25px;line-height:11.1px;left:869.20px;transform-origin:50% 50%;transform:translateX(-50%) scaleX(0.9275);">SF</span>
<span class="t n in" style="top:567px;font-size:10.25px;line-height:12.3px;right:555.90px;transform-origin:100% 50%;transform:scaleX(1.173);">1.200</span>
<span class="t n" style="top:587px;font-size:10.25px;line-height:12.3px;left:558.30px;transform-origin:0 50%;transform:scaleX(1.1883);">4 bedrooms</span>
<span class="t u" style="top:587px;font-size:9.25px;line-height:11.1px;left:869.20px;transform-origin:50% 50%;transform:translateX(-50%) scaleX(0.9275);">SF</span>
<span class="t n in" style="top:587px;font-size:10.25px;line-height:12.3px;right:555.90px;transform-origin:100% 50%;transform:scaleX(1.173);">1.450</span>
<span class="t bl" style="top:607px;font-size:10.25px;line-height:12.3px;left:549.50px;transform-origin:0 50%;transform:scaleX(1.1287);">Average Apartment Size</span>
<span class="t ub" style="top:607px;font-size:9.25px;line-height:11.1px;left:869.20px;transform-origin:50% 50%;transform:translateX(-50%) scaleX(1.1542);">#</span>
<span class="t bl" style="top:607px;font-size:10.25px;line-height:12.3px;right:555.90px;transform-origin:100% 50%;transform:scaleX(1.1735);">802</span>
<span class="t g" style="top:645px;font-size:11.25px;line-height:13.5px;left:549.50px;transform-origin:0 50%;transform:scaleX(1.0964);">Revenue Assumptions</span>
<span class="t bl" style="top:666px;font-size:10.25px;line-height:12.3px;left:549.50px;transform-origin:0 50%;transform:scaleX(1.0964);">Rental Fees</span>
<span class="t n" style="top:686px;font-size:10.25px;line-height:12.3px;left:558.30px;transform-origin:0 50%;transform:scaleX(1.1803);">Studio</span>
<span class="t u" style="top:686px;font-size:9.25px;line-height:11.1px;left:869.20px;transform-origin:50% 50%;transform:translateX(-50%) scaleX(1.271);">$ / unit / month</span>
<span class="t n in" style="top:686px;font-size:10.25px;line-height:12.3px;right:555.90px;transform-origin:100% 50%;transform:scaleX(1.173);">1.200</span>
<span class="t n" style="top:705px;font-size:10.25px;line-height:12.3px;left:558.30px;transform-origin:0 50%;transform:scaleX(1.2073);">1 bedroom</span>
<span class="t u" style="top:705px;font-size:9.25px;line-height:11.1px;left:869.20px;transform-origin:50% 50%;transform:translateX(-50%) scaleX(1.271);">$ / unit / month</span>
<span class="t n in" style="top:705px;font-size:10.25px;line-height:12.3px;right:555.90px;transform-origin:100% 50%;transform:scaleX(1.173);">1.900</span>
<span class="t n" style="top:725px;font-size:10.25px;line-height:12.3px;left:558.30px;transform-origin:0 50%;transform:scaleX(1.1883);">2 bedrooms</span>
<span class="t u" style="top:725px;font-size:9.25px;line-height:11.1px;left:869.20px;transform-origin:50% 50%;transform:translateX(-50%) scaleX(1.271);">$ / unit / month</span>
<span class="t n in" style="top:725px;font-size:10.25px;line-height:12.3px;right:555.90px;transform-origin:100% 50%;transform:scaleX(1.173);">2.700</span>
<span class="t n" style="top:745px;font-size:10.25px;line-height:12.3px;left:558.30px;transform-origin:0 50%;transform:scaleX(1.1883);">3 bedrooms</span>
<span class="t u" style="top:745px;font-size:9.25px;line-height:11.1px;left:869.20px;transform-origin:50% 50%;transform:translateX(-50%) scaleX(1.271);">$ / unit / month</span>
<span class="t n in" style="top:745px;font-size:10.25px;line-height:12.3px;right:555.90px;transform-origin:100% 50%;transform:scaleX(1.173);">3.800</span>
<span class="t n" style="top:764px;font-size:10.25px;line-height:12.3px;left:558.30px;transform-origin:0 50%;transform:scaleX(1.1883);">4 bedrooms</span>
<span class="t u" style="top:764px;font-size:9.25px;line-height:11.1px;left:869.20px;transform-origin:50% 50%;transform:translateX(-50%) scaleX(1.271);">$ / unit / month</span>
<span class="t n in" style="top:764px;font-size:10.25px;line-height:12.3px;right:555.90px;transform-origin:100% 50%;transform:scaleX(1.173);">4.500</span>
<span class="t bl" style="top:784px;font-size:10.25px;line-height:12.3px;left:549.50px;transform-origin:0 50%;transform:scaleX(1.1164);">Average Rental Fee</span>
<span class="t ub" style="top:784px;font-size:9.25px;line-height:11.1px;left:869.20px;transform-origin:50% 50%;transform:translateX(-50%) scaleX(1.1542);">#</span>
<span class="t bl" style="top:784px;font-size:10.25px;line-height:12.3px;right:555.90px;transform-origin:100% 50%;transform:scaleX(1.1808);">2.518</span>
<span class="t bl" style="top:824px;font-size:10.25px;line-height:12.3px;left:549.50px;transform-origin:0 50%;transform:scaleX(1.0986);">Rent Roll Assumptions</span>
<span class="t n" style="top:843px;font-size:10.25px;line-height:12.3px;left:558.30px;transform-origin:0 50%;transform:scaleX(1.1192);">Avg. Rent Pace</span>
<span class="t u" style="top:843px;font-size:9.25px;line-height:11.1px;left:869.20px;transform-origin:50% 50%;transform:translateX(-50%) scaleX(1.2353);"># of units / month</span>
<span class="t n in" style="top:843px;font-size:10.25px;line-height:12.3px;right:555.90px;transform-origin:100% 50%;transform:scaleX(1.1735);">10</span>
<span class="t n" style="top:863px;font-size:10.25px;line-height:12.3px;left:558.30px;transform-origin:0 50%;transform:scaleX(1.1385);">Free Rent</span>
<span class="t u" style="top:863px;font-size:9.25px;line-height:11.1px;left:869.20px;transform-origin:50% 50%;transform:translateX(-50%) scaleX(1.2073);"># of months</span>
<span class="t n in" style="top:863px;font-size:10.25px;line-height:12.3px;right:555.90px;transform-origin:100% 50%;transform:scaleX(1.1735);">1</span>
<span class="t n" style="top:903px;font-size:10.25px;line-height:12.3px;left:558.30px;transform-origin:0 50%;transform:scaleX(1.1814);">Months Until Full Occupancy</span>
<span class="t u" style="top:903px;font-size:9.25px;line-height:11.1px;left:869.20px;transform-origin:50% 50%;transform:translateX(-50%) scaleX(1.2073);"># of months</span>
<span class="t n" style="top:903px;font-size:10.25px;line-height:12.3px;right:555.90px;transform-origin:100% 50%;transform:scaleX(1.1735);">9</span>
<span class="t n" style="top:922px;font-size:10.25px;line-height:12.3px;left:558.30px;transform-origin:0 50%;transform:scaleX(1.1837);">Last Month Rented Units</span>
<span class="t u" style="top:922px;font-size:9.25px;line-height:11.1px;left:869.20px;transform-origin:50% 50%;transform:translateX(-50%) scaleX(1.1938);"># of Units</span>
<span class="t n" style="top:922px;font-size:10.25px;line-height:12.3px;right:555.90px;transform-origin:100% 50%;transform:scaleX(1.1735);">10</span>
<span class="t n" style="top:942px;font-size:10.25px;line-height:12.3px;left:558.30px;transform-origin:0 50%;transform:scaleX(1.1777);">Full Occupancy Month</span>
<span class="t u" style="top:942px;font-size:9.25px;line-height:11.1px;left:869.20px;transform-origin:50% 50%;transform:translateX(-50%) scaleX(1.2596);">month</span>
<span class="t n" style="top:942px;font-size:10.25px;line-height:12.3px;right:551.60px;transform-origin:100% 50%;transform:scaleX(1.2372);">Month 28</span>
<span class="t bl" style="top:981px;font-size:10.25px;line-height:12.3px;left:549.50px;transform-origin:0 50%;transform:scaleX(1.1145);">Other Revenue Assumptions</span>
<span class="t n" style="top:1001px;font-size:10.25px;line-height:12.3px;left:558.30px;transform-origin:0 50%;transform:scaleX(1.1684);">Move in Fee</span>
<span class="t u" style="top:1001px;font-size:9.25px;line-height:11.1px;left:869.20px;transform-origin:50% 50%;transform:translateX(-50%) scaleX(1.2728);">$ / unit</span>
<span class="t n in" style="top:1001px;font-size:10.25px;line-height:12.3px;right:555.90px;transform-origin:100% 50%;transform:scaleX(1.1735);">800</span>
<span class="t n" style="top:1021px;font-size:10.25px;line-height:12.3px;left:558.30px;transform-origin:0 50%;transform:scaleX(1.0139);">RUBS</span>
<span class="t u" style="top:1021px;font-size:9.25px;line-height:11.1px;left:869.20px;transform-origin:50% 50%;transform:translateX(-50%) scaleX(1.271);">$ / unit / month</span>
<span class="t n in" style="top:1021px;font-size:10.25px;line-height:12.3px;right:555.90px;transform-origin:100% 50%;transform:scaleX(1.1735);">200</span>
<span class="t n" style="top:1041px;font-size:10.25px;line-height:12.3px;left:558.30px;transform-origin:0 50%;transform:scaleX(1.1942);">Other Income</span>
<span class="t u" style="top:1041px;font-size:9.25px;line-height:11.1px;left:869.20px;transform-origin:50% 50%;transform:translateX(-50%) scaleX(1.271);">$ / unit / month</span>
<span class="t n in" style="top:1041px;font-size:10.25px;line-height:12.3px;right:555.90px;transform-origin:100% 50%;transform:scaleX(1.1735);">450</span>
<span class="t bl" style="top:1080px;font-size:10.25px;line-height:12.3px;left:549.50px;transform-origin:0 50%;transform:scaleX(1.115);">Other Assumptions</span>
<span class="t n" style="top:1100px;font-size:10.25px;line-height:12.3px;left:558.30px;transform-origin:0 50%;transform:scaleX(1.1499);">General Vacancy</span>
<span class="t u" style="top:1100px;font-size:9.25px;line-height:11.1px;left:869.20px;transform-origin:50% 50%;transform:translateX(-50%) scaleX(1.1297);">% of Gross Rent</span>
<span class="t n in" style="top:1100px;font-size:10.25px;line-height:12.3px;right:551.60px;transform-origin:100% 50%;transform:scaleX(1.1176);">5,0%</span>
<span class="t n" style="top:1139px;font-size:10.25px;line-height:12.3px;left:558.30px;transform-origin:0 50%;transform:scaleX(1.1409);">Bad Debts</span>
<span class="t u" style="top:1139px;font-size:9.25px;line-height:11.1px;left:869.20px;transform-origin:50% 50%;transform:translateX(-50%) scaleX(1.1297);">% of Gross Rent</span>
<span class="t n in" style="top:1139px;font-size:10.25px;line-height:12.3px;right:551.60px;transform-origin:100% 50%;transform:scaleX(1.1176);">2,0%</span>
<div class="b" style="left:1078.00px;top:163.20px;width:512.00px;height:19.90px;background:#cdb164;"></div>
<div class="b" style="left:1464.70px;top:183.10px;width:124.90px;height:19.80px;background:#f3f3f4;box-shadow:inset 0 1px 0 #dfdfdf,inset 1px 0 0 #dfdfdf,inset 0 -0.5px 0 #dfdfdf;"></div>
<div class="b" style="left:1464.70px;top:242.40px;width:124.90px;height:20.50px;background:#f3f3f4;box-shadow:inset 0 1px 0 #dfdfdf,inset 1px 0 0 #dfdfdf,inset 0 -0.5px 0 #dfdfdf;"></div>
<div class="b" style="left:1464.70px;top:262.90px;width:124.90px;height:19.70px;background:#f3f3f4;box-shadow:inset 0 1px 0 #dfdfdf,inset 1px 0 0 #dfdfdf,inset 0 -0.5px 0 #dfdfdf;"></div>
<div class="b" style="left:1464.70px;top:282.60px;width:124.90px;height:19.80px;background:#f3f3f4;box-shadow:inset 0 1px 0 #dfdfdf,inset 1px 0 0 #dfdfdf,inset 0 -0.5px 0 #dfdfdf;"></div>
<div class="b" style="left:1464.70px;top:302.40px;width:124.90px;height:19.80px;background:#f3f3f4;box-shadow:inset 0 1px 0 #dfdfdf,inset 1px 0 0 #dfdfdf,inset 0 -0.5px 0 #dfdfdf;"></div>
<div class="b" style="left:1464.70px;top:322.20px;width:124.90px;height:19.50px;background:#f3f3f4;box-shadow:inset 0 1px 0 #dfdfdf,inset 1px 0 0 #dfdfdf,inset 0 -0.5px 0 #dfdfdf;"></div>
<div class="b" style="left:1464.70px;top:381.40px;width:124.90px;height:19.70px;background:#f3f3f4;box-shadow:inset 0 1px 0 #dfdfdf,inset 1px 0 0 #dfdfdf,inset 0 -0.5px 0 #dfdfdf;"></div>
<div class="b" style="left:1464.70px;top:401.10px;width:124.90px;height:19.80px;background:#f3f3f4;box-shadow:inset 0 1px 0 #dfdfdf,inset 1px 0 0 #dfdfdf,inset 0 -0.5px 0 #dfdfdf;"></div>
<div class="b" style="left:1464.70px;top:420.90px;width:124.90px;height:19.50px;background:#f3f3f4;box-shadow:inset 0 1px 0 #dfdfdf,inset 1px 0 0 #dfdfdf,inset 0 -0.5px 0 #dfdfdf;"></div>
<div class="b" style="left:1464.70px;top:440.40px;width:124.90px;height:20.00px;background:#f3f3f4;box-shadow:inset 0 1px 0 #dfdfdf,inset 1px 0 0 #dfdfdf,inset 0 -0.5px 0 #dfdfdf;"></div>
<div class="b" style="left:1464.70px;top:460.40px;width:124.90px;height:19.65px;background:#f3f3f4;box-shadow:inset 0 1px 0 #dfdfdf,inset 1px 0 0 #dfdfdf,inset 0 -0.5px 0 #dfdfdf;"></div>
<div class="b" style="left:1078.00px;top:499.70px;width:512.00px;height:19.70px;background:#7f7f7f;"></div>
<div class="b" style="left:1278.00px;top:578.70px;width:76.60px;height:19.70px;background:#f3f3f4;box-shadow:inset 0 0 0 1px #dfdfdf;"></div>
<div class="b" style="left:1464.70px;top:617.90px;width:124.90px;height:20.00px;background:#f3f3f4;box-shadow:inset 0 1px 0 #dfdfdf,inset 1px 0 0 #dfdfdf,inset 0 -0.5px 0 #dfdfdf;"></div>
<div class="b" style="left:1464.70px;top:677.40px;width:124.90px;height:19.50px;background:#f3f3f4;box-shadow:inset 0 1px 0 #dfdfdf,inset 1px 0 0 #dfdfdf,inset 0 -0.5px 0 #dfdfdf;"></div>
<div class="b" style="left:1078.00px;top:736.40px;width:512.00px;height:19.50px;background:#cdb164;"></div>
<div class="b" style="left:1464.70px;top:775.70px;width:124.90px;height:19.80px;background:#f3f3f4;box-shadow:inset 0 1px 0 #dfdfdf,inset 1px 0 0 #dfdfdf,inset 0 -0.5px 0 #dfdfdf;"></div>
<div class="b" style="left:1078.00px;top:815.30px;width:512.00px;height:19.80px;background:#cdb164;"></div>
<div class="b" style="left:1078.00px;top:835.10px;width:512.00px;height:19.60px;background:#7f7f7f;"></div>
<div class="b" style="left:1464.70px;top:854.70px;width:124.90px;height:19.85px;background:#f3f3f4;box-shadow:inset 0 1px 0 #dfdfdf,inset 1px 0 0 #dfdfdf,inset 0 -0.5px 0 #dfdfdf;"></div>
<div class="b" style="left:1078.00px;top:933.70px;width:512.00px;height:19.40px;background:#7f7f7f;"></div>
<div class="b" style="left:1077.80px;top:163.20px;width:1.2px;height:553.50px;background:#c9cdd6"></div>
<div class="b" style="left:1077.80px;top:736.40px;width:1.2px;height:59.10px;background:#c9cdd6"></div>
<div class="b" style="left:1077.80px;top:815.30px;width:1.2px;height:335.00px;background:#c9cdd6"></div>
<div class="b" style="left:1078.00px;top:163.20px;width:512.00px;height:19.90px;background:#cdb164;"></div>
<div class="b" style="left:1078.00px;top:499.70px;width:512.00px;height:19.70px;background:#7f7f7f;"></div>
<div class="b" style="left:1078.00px;top:736.40px;width:512.00px;height:19.50px;background:#cdb164;"></div>
<div class="b" style="left:1078.00px;top:815.30px;width:512.00px;height:19.80px;background:#cdb164;"></div>
<div class="b" style="left:1078.00px;top:835.10px;width:512.00px;height:19.60px;background:#7f7f7f;"></div>
<div class="b" style="left:1078.00px;top:933.70px;width:512.00px;height:19.40px;background:#7f7f7f;"></div>
<div class="b" style="left:1078.00px;top:241.80px;width:512.00px;height:1.2px;background:#bdbdbd"></div>
<div class="b" style="left:1078.00px;top:380.80px;width:512.00px;height:1.2px;background:#bdbdbd"></div>
<div class="b" style="left:1078.00px;top:637.30px;width:512.00px;height:1.2px;background:#bdbdbd"></div>
<div class="b" style="left:1078.00px;top:696.30px;width:512.00px;height:1.2px;background:#bdbdbd"></div>
<div class="b" style="left:1078.00px;top:716.10px;width:512.00px;height:1.2px;background:#bdbdbd"></div>
<div class="b" style="left:1078.00px;top:775.10px;width:512.00px;height:1.2px;background:#bdbdbd"></div>
<div class="b" style="left:1078.00px;top:794.90px;width:512.00px;height:1.2px;background:#bdbdbd"></div>
<div class="b" style="left:1078.00px;top:893.80px;width:512.00px;height:1.2px;background:#bdbdbd"></div>
<div class="b" style="left:1078.00px;top:972.50px;width:512.00px;height:1.2px;background:#bdbdbd"></div>
<div class="b" style="left:1078.00px;top:1031.80px;width:512.00px;height:1.2px;background:#bdbdbd"></div>
<div class="b" style="left:1078.00px;top:1090.80px;width:512.00px;height:1.2px;background:#bdbdbd"></div>
<div class="b" style="left:1078.00px;top:1130.10px;width:512.00px;height:1.2px;background:#bdbdbd"></div>
<div class="b" style="left:1078.00px;top:1149.70px;width:512.00px;height:1.2px;background:#bdbdbd"></div>
<span class="t g" style="top:171px;font-size:11.25px;line-height:13.5px;left:1089.30px;transform-origin:0 50%;transform:scaleX(1.0876);">Operating Expenses Assumptions</span>
<span class="t n" style="top:191px;font-size:10.25px;line-height:12.3px;left:1098.10px;transform-origin:0 50%;transform:scaleX(1.1739);">Management Fee</span>
<span class="t u" style="top:191px;font-size:9.25px;line-height:11.1px;left:1409.30px;transform-origin:50% 50%;transform:translateX(-50%) scaleX(1.1714);">% of revenue</span>
<span class="t n in" style="top:191px;font-size:10.25px;line-height:12.3px;right:12.00px;transform-origin:100% 50%;transform:scaleX(1.1176);">3,0%</span>
<span class="t bl" style="top:231px;font-size:10.25px;line-height:12.3px;left:1089.30px;transform-origin:0 50%;transform:scaleX(1.0901);">Unit Expenses</span>
<span class="t n" style="top:251px;font-size:10.25px;line-height:12.3px;left:1098.10px;transform-origin:0 50%;transform:scaleX(1.1074);">HOA</span>
<span class="t u" style="top:251px;font-size:9.25px;line-height:11.1px;left:1409.30px;transform-origin:50% 50%;transform:translateX(-50%) scaleX(1.271);">$ / unit / month</span>
<span class="t n in" style="top:251px;font-size:10.25px;line-height:12.3px;right:16.30px;transform-origin:100% 50%;transform:scaleX(1.1735);">150</span>
<span class="t n" style="top:271px;font-size:10.25px;line-height:12.3px;left:1098.10px;transform-origin:0 50%;transform:scaleX(1.161);">Housekeeping</span>
<span class="t u" style="top:271px;font-size:9.25px;line-height:11.1px;left:1409.30px;transform-origin:50% 50%;transform:translateX(-50%) scaleX(1.271);">$ / unit / month</span>
<span class="t n in" style="top:271px;font-size:10.25px;line-height:12.3px;right:16.30px;transform-origin:100% 50%;transform:scaleX(1.1735);">40</span>
<span class="t n" style="top:291px;font-size:10.25px;line-height:12.3px;left:1098.10px;transform-origin:0 50%;transform:scaleX(1.2077);">Maintenance</span>
<span class="t u" style="top:291px;font-size:9.25px;line-height:11.1px;left:1409.30px;transform-origin:50% 50%;transform:translateX(-50%) scaleX(1.271);">$ / unit / month</span>
<span class="t n in" style="top:291px;font-size:10.25px;line-height:12.3px;right:16.30px;transform-origin:100% 50%;transform:scaleX(1.1735);">60</span>
<span class="t n" style="top:311px;font-size:10.25px;line-height:12.3px;left:1098.10px;transform-origin:0 50%;transform:scaleX(1.1816);">Healthcare</span>
<span class="t u" style="top:311px;font-size:9.25px;line-height:11.1px;left:1409.30px;transform-origin:50% 50%;transform:translateX(-50%) scaleX(1.271);">$ / unit / month</span>
<span class="t n in" style="top:311px;font-size:10.25px;line-height:12.3px;right:16.30px;transform-origin:100% 50%;transform:scaleX(1.1735);">80</span>
<span class="t n" style="top:330px;font-size:10.25px;line-height:12.3px;left:1098.10px;transform-origin:0 50%;transform:scaleX(1.1484);">Activities &amp; Social Services</span>
<span class="t u" style="top:330px;font-size:9.25px;line-height:11.1px;left:1409.30px;transform-origin:50% 50%;transform:translateX(-50%) scaleX(1.271);">$ / unit / month</span>
<span class="t n in" style="top:330px;font-size:10.25px;line-height:12.3px;right:16.30px;transform-origin:100% 50%;transform:scaleX(1.1735);">50</span>
<span class="t bl" style="top:370px;font-size:10.25px;line-height:12.3px;left:1089.30px;transform-origin:0 50%;transform:scaleX(1.0941);">Other Expenses</span>
<span class="t n" style="top:390px;font-size:10.25px;line-height:12.3px;left:1098.10px;transform-origin:0 50%;transform:scaleX(1.1878);">Property Payroll</span>
<span class="t u" style="top:390px;font-size:9.25px;line-height:11.1px;left:1409.30px;transform-origin:50% 50%;transform:translateX(-50%) scaleX(1.2564);">$ / month</span>
<span class="t n in" style="top:390px;font-size:10.25px;line-height:12.3px;right:16.30px;transform-origin:100% 50%;transform:scaleX(1.1731);">10.000</span>
<span class="t n" style="top:409px;font-size:10.25px;line-height:12.3px;left:1098.10px;transform-origin:0 50%;transform:scaleX(1.2304);">Marketing</span>
<span class="t u" style="top:409px;font-size:9.25px;line-height:11.1px;left:1409.30px;transform-origin:50% 50%;transform:translateX(-50%) scaleX(1.2564);">$ / month</span>
<span class="t n in" style="top:409px;font-size:10.25px;line-height:12.3px;right:16.30px;transform-origin:100% 50%;transform:scaleX(1.173);">3.000</span>
<span class="t n" style="top:429px;font-size:10.25px;line-height:12.3px;left:1098.10px;transform-origin:0 50%;transform:scaleX(1.1632);">Insurance</span>
<span class="t u" style="top:429px;font-size:9.25px;line-height:11.1px;left:1409.30px;transform-origin:50% 50%;transform:translateX(-50%) scaleX(1.2564);">$ / month</span>
<span class="t n in" style="top:429px;font-size:10.25px;line-height:12.3px;right:16.30px;transform-origin:100% 50%;transform:scaleX(1.173);">2.000</span>
<span class="t n" style="top:449px;font-size:10.25px;line-height:12.3px;left:1098.10px;transform-origin:0 50%;transform:scaleX(1.1534);">Contractual Services</span>
<span class="t u" style="top:449px;font-size:9.25px;line-height:11.1px;left:1409.30px;transform-origin:50% 50%;transform:translateX(-50%) scaleX(1.2564);">$ / month</span>
<span class="t n in" style="top:449px;font-size:10.25px;line-height:12.3px;right:16.30px;transform-origin:100% 50%;transform:scaleX(1.173);">1.000</span>
<span class="t n" style="top:469px;font-size:10.25px;line-height:12.3px;left:1098.10px;transform-origin:0 50%;transform:scaleX(1.1077);">Leasing Commissions (LCs)</span>
<span class="t u" style="top:469px;font-size:9.25px;line-height:11.1px;left:1409.30px;transform-origin:50% 50%;transform:translateX(-50%) scaleX(1.1901);">% of rental fee</span>
<span class="t n in" style="top:469px;font-size:10.25px;line-height:12.3px;right:12.00px;transform-origin:100% 50%;transform:scaleX(1.1285);">75,0%</span>
<div class="b" style="left:1272.50px;top:461.40px;width:0;height:0;border-top:5.5px solid #c0141c;border-left:5.5px solid transparent"></div>
<span class="t h" style="top:508px;font-size:10.25px;line-height:12.3px;left:1089.30px;transform-origin:0 50%;transform:scaleX(1.1194);">Property Taxes</span>
<span class="t bl ul" style="top:528px;font-size:10.25px;line-height:12.3px;left:1089.30px;transform-origin:0 50%;transform:scaleX(1.1128);">Development Costs</span>
<span class="t n" style="top:548px;font-size:10.25px;line-height:12.3px;left:1098.10px;transform-origin:0 50%;transform:scaleX(1.127);">Land Purchase Price</span>
<span class="t u" style="top:548px;font-size:9.25px;line-height:11.1px;left:1409.30px;transform-origin:50% 50%;transform:translateX(-50%) scaleX(1.175);">$</span>
<span class="t n" style="top:548px;font-size:10.25px;line-height:12.3px;right:16.30px;transform-origin:100% 50%;transform:scaleX(1.173);">1.587.407</span>
<span class="t n" style="top:567px;font-size:10.25px;line-height:12.3px;left:1098.10px;transform-origin:0 50%;transform:scaleX(1.1275);">Hard Costs</span>
<span class="t u" style="top:567px;font-size:9.25px;line-height:11.1px;left:1409.30px;transform-origin:50% 50%;transform:translateX(-50%) scaleX(1.175);">$</span>
<span class="t n" style="top:567px;font-size:10.25px;line-height:12.3px;right:16.30px;transform-origin:100% 50%;transform:scaleX(1.173);">6.710.000</span>
<span class="t n" style="top:587px;font-size:10.25px;line-height:12.3px;left:1098.10px;transform-origin:0 50%;transform:scaleX(1.1588);">Soft &amp; G&amp;A Costs (include?)</span>
<span class="t u" style="top:587px;font-size:9.25px;line-height:11.1px;left:1409.30px;transform-origin:50% 50%;transform:translateX(-50%) scaleX(1.175);">$</span>
<span class="t n" style="top:587px;font-size:10.25px;line-height:12.3px;right:16.30px;transform-origin:100% 50%;transform:scaleX(1.173);">3.465.000</span>
<span class="t n in" style="top:587px;font-size:10.25px;line-height:12.3px;left:1316.30px;transform-origin:50% 50%;transform:translateX(-50%) scaleX(1.0854);">Yes</span>
<span class="t n" style="top:626px;font-size:10.25px;line-height:12.3px;left:1098.10px;transform-origin:0 50%;transform:scaleX(1.1425);">Assessment Percentage</span>
<span class="t u" style="top:626px;font-size:9.25px;line-height:11.1px;left:1409.30px;transform-origin:50% 50%;transform:translateX(-50%) scaleX(1.0376);">%</span>
<span class="t n in" style="top:626px;font-size:10.25px;line-height:12.3px;right:12.00px;transform-origin:100% 50%;transform:scaleX(1.1285);">60,0%</span>
<span class="t bl" style="top:646px;font-size:10.25px;line-height:12.3px;left:1089.30px;transform-origin:0 50%;transform:scaleX(1.0802);">Assessed Value</span>
<span class="t ub" style="top:646px;font-size:9.25px;line-height:11.1px;left:1409.30px;transform-origin:50% 50%;transform:translateX(-50%) scaleX(1.175);">$</span>
<span class="t bl" style="top:646px;font-size:10.25px;line-height:12.3px;right:16.30px;transform-origin:100% 50%;transform:scaleX(1.1817);">7.057.444</span>
<span class="t n" style="top:686px;font-size:10.25px;line-height:12.3px;left:1098.10px;transform-origin:0 50%;transform:scaleX(1.1767);">Property Tax Rate (Mill Rate)</span>
<span class="t u" style="top:686px;font-size:9.25px;line-height:11.1px;left:1409.30px;transform-origin:50% 50%;transform:translateX(-50%) scaleX(1.0376);">%</span>
<span class="t n in" style="top:686px;font-size:10.25px;line-height:12.3px;right:12.00px;transform-origin:100% 50%;transform:scaleX(1.1176);">2,5%</span>
<span class="t bl" style="top:705px;font-size:10.25px;line-height:12.3px;left:1089.30px;transform-origin:0 50%;transform:scaleX(1.0956);">Taxes</span>
<span class="t ub" style="top:705px;font-size:9.25px;line-height:11.1px;left:1409.30px;transform-origin:50% 50%;transform:translateX(-50%) scaleX(1.2047);">$ / year</span>
<span class="t bl" style="top:705px;font-size:10.25px;line-height:12.3px;right:16.30px;transform-origin:100% 50%;transform:scaleX(1.1785);">176.436</span>
<span class="t g" style="top:744px;font-size:11.25px;line-height:13.5px;left:1089.30px;transform-origin:0 50%;transform:scaleX(1.0691);">CapEx Assumptions</span>
<span class="t bl" style="top:764px;font-size:10.25px;line-height:12.3px;left:1089.30px;transform-origin:0 50%;transform:scaleX(1.0974);">CapEx During Operations</span>
<span class="t n" style="top:784px;font-size:10.25px;line-height:12.3px;left:1098.10px;transform-origin:0 50%;transform:scaleX(1.0874);">CapEx Reserve</span>
<span class="t u" style="top:784px;font-size:9.25px;line-height:11.1px;left:1409.30px;transform-origin:50% 50%;transform:translateX(-50%) scaleX(1.271);">$ / unit / month</span>
<span class="t n in" style="top:784px;font-size:10.25px;line-height:12.3px;right:16.30px;transform-origin:100% 50%;transform:scaleX(1.1735);">50</span>
<span class="t g" style="top:823px;font-size:11.25px;line-height:13.5px;left:1089.30px;transform-origin:0 50%;transform:scaleX(1.0865);">Project Financing</span>
<span class="t h" style="top:843px;font-size:10.25px;line-height:12.3px;left:1089.30px;transform-origin:0 50%;transform:scaleX(1.0647);">Financing Sources</span>
<span class="t n" style="top:863px;font-size:10.25px;line-height:12.3px;left:1098.10px;transform-origin:0 50%;transform:scaleX(1.1655);">Loan to Development Costs</span>
<span class="t u" style="top:863px;font-size:9.25px;line-height:11.1px;left:1409.30px;transform-origin:50% 50%;transform:translateX(-50%) scaleX(1.0376);">%</span>
<span class="t n in" style="top:863px;font-size:10.25px;line-height:12.3px;right:12.00px;transform-origin:100% 50%;transform:scaleX(1.1285);">55,0%</span>
<span class="t n" style="top:883px;font-size:10.25px;line-height:12.3px;left:1098.10px;transform-origin:0 50%;transform:scaleX(1.1834);">Equity</span>
<span class="t u" style="top:883px;font-size:9.25px;line-height:11.1px;left:1409.30px;transform-origin:50% 50%;transform:translateX(-50%) scaleX(1.0376);">%</span>
<span class="t n" style="top:883px;font-size:10.25px;line-height:12.3px;right:12.00px;transform-origin:100% 50%;transform:scaleX(1.1285);">45,0%</span>
<span class="t bl" style="top:903px;font-size:10.25px;line-height:12.3px;left:1089.30px;transform-origin:0 50%;transform:scaleX(1.179);">Total</span>
<span class="t ub" style="top:903px;font-size:9.25px;line-height:11.1px;left:1409.30px;transform-origin:50% 50%;transform:translateX(-50%) scaleX(1.0579);">%</span>
<span class="t bl" style="top:903px;font-size:10.25px;line-height:12.3px;right:12.00px;transform-origin:100% 50%;transform:scaleX(1.1448);">100,0%</span>
<span class="t h" style="top:942px;font-size:10.25px;line-height:12.3px;left:1089.30px;transform-origin:0 50%;transform:scaleX(1.0693);">Uses &amp; Sources of Cash</span>
<span class="t bl" style="top:961px;font-size:10.25px;line-height:12.3px;left:1089.30px;transform-origin:0 50%;transform:scaleX(1.0606);">Uses of Cash</span>
<span class="t n" style="top:981px;font-size:10.25px;line-height:12.3px;left:1098.10px;transform-origin:0 50%;transform:scaleX(1.1077);">Land Costs</span>
<span class="t u" style="top:981px;font-size:9.25px;line-height:11.1px;left:1409.30px;transform-origin:50% 50%;transform:translateX(-50%) scaleX(1.175);">$</span>
<span class="t n" style="top:981px;font-size:10.25px;line-height:12.3px;right:16.30px;transform-origin:100% 50%;transform:scaleX(1.173);">1.587.407</span>
<span class="t n" style="top:1001px;font-size:10.25px;line-height:12.3px;left:1098.10px;transform-origin:0 50%;transform:scaleX(1.1663);">Development Costs</span>
<span class="t u" style="top:1001px;font-size:9.25px;line-height:11.1px;left:1409.30px;transform-origin:50% 50%;transform:translateX(-50%) scaleX(1.175);">$</span>
<span class="t n" style="top:1001px;font-size:10.25px;line-height:12.3px;right:16.30px;transform-origin:100% 50%;transform:scaleX(1.173);">10.175.000</span>
<span class="t n" style="top:1021px;font-size:10.25px;line-height:12.3px;left:1098.10px;transform-origin:0 50%;transform:scaleX(1.1589);">Operating CF Shortfall</span>
<span class="t u" style="top:1021px;font-size:9.25px;line-height:11.1px;left:1409.30px;transform-origin:50% 50%;transform:translateX(-50%) scaleX(1.175);">$</span>
<span class="t n" style="top:1021px;font-size:10.25px;line-height:12.3px;right:16.30px;transform-origin:100% 50%;transform:scaleX(1.1804);">-</span>
<span class="t bl" style="top:1041px;font-size:10.25px;line-height:12.3px;left:1089.30px;transform-origin:0 50%;transform:scaleX(1.0912);">Total Uses of Cash</span>
<span class="t ub" style="top:1041px;font-size:9.25px;line-height:11.1px;left:1409.30px;transform-origin:50% 50%;transform:translateX(-50%) scaleX(1.175);">$</span>
<span class="t bl" style="top:1041px;font-size:10.25px;line-height:12.3px;right:16.30px;transform-origin:100% 50%;transform:scaleX(1.1939);">11.762.407</span>
<span class="t bl" style="top:1080px;font-size:10.25px;line-height:12.3px;left:1089.30px;transform-origin:0 50%;transform:scaleX(1.0587);">Sources of Cash</span>
<span class="t n" style="top:1100px;font-size:10.25px;line-height:12.3px;left:1098.10px;transform-origin:0 50%;transform:scaleX(1.2026);">Debt</span>
<span class="t n" style="top:1100px;font-size:10.25px;line-height:12.3px;right:16.30px;transform-origin:100% 50%;transform:scaleX(1.173);">6.469.324</span>
<span class="t n" style="top:1119px;font-size:10.25px;line-height:12.3px;left:1098.10px;transform-origin:0 50%;transform:scaleX(1.1834);">Equity</span>
<span class="t n" style="top:1119px;font-size:10.25px;line-height:12.3px;right:16.30px;transform-origin:100% 50%;transform:scaleX(1.173);">5.293.083</span>
<span class="t bl" style="top:1139px;font-size:10.25px;line-height:12.3px;left:1089.30px;transform-origin:0 50%;transform:scaleX(1.085);">Total Sources of Cash</span>
<span class="t bl" style="top:1139px;font-size:10.25px;line-height:12.3px;right:16.30px;transform-origin:100% 50%;transform:scaleX(1.1939);">11.762.407</span>
</body></html>
